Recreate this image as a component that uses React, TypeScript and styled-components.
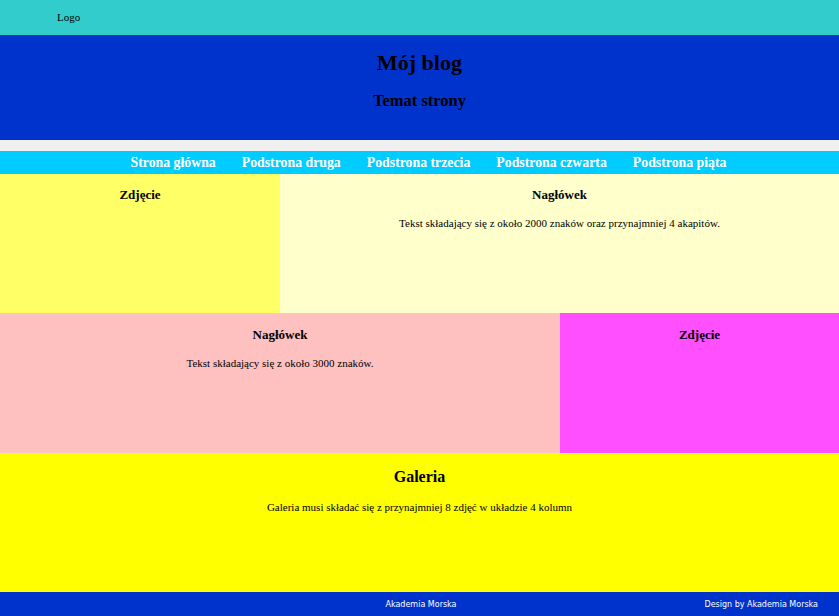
import React from "react";
import styled, { createGlobalStyle } from "styled-components";

const Global = createGlobalStyle`
  html, body { margin: 0; padding: 0; background: #f0f0f0; }
  body { font-family: "Liberation Serif", "Times New Roman", serif; color: #000; }
`;

const Page = styled.div`
  width: 839px;
  display: flex;
  flex-direction: column;
`;

const TopBar = styled.div`
  height: 35px;
  background: #33cccc;
  display: flex;
  align-items: center;
  padding-left: 57px;
  padding-bottom: 1px;
  box-sizing: border-box;
  font-size: 11px;
`;

const Header = styled.header`
  height: 105px;
  background: #0033cc;
  display: flex;
  flex-direction: column;
  align-items: center;
`;

const Title = styled.h1`
  margin: 14px 0 0;
  font-size: 22px;
  line-height: 28px;
  font-weight: bold;
`;

const Subtitle = styled.h2`
  margin: 14px 0 0;
  font-size: 16.5px;
  line-height: 20px;
  font-weight: bold;
`;

const Gap = styled.div`
  height: 11px;
  background: #f0f0f0;
`;

const Nav = styled.nav`
  height: 23px;
  background: #00ccff;
  display: flex;
  justify-content: center;
  align-items: center;
  gap: 26px;
  padding-left: 18px;
`;

const NavLink = styled.a`
  color: #fff;
  font-weight: bold;
  font-size: 13.8px;
  text-decoration: none;
  white-space: nowrap;
`;

const Row = styled.section<{ $cols: string; $h: number }>`
  display: grid;
  grid-template-columns: ${(p) => p.$cols};
  height: ${(p) => p.$h}px;
`;

const Cell = styled.div<{ $bg: string; $top?: number }>`
  background: ${(p) => p.$bg};
  text-align: center;
  padding-top: ${(p) => p.$top ?? 12}px;
  box-sizing: border-box;
`;

const CellTitle = styled.h3`
  margin: 0;
  font-size: 13px;
  line-height: 17px;
  font-weight: bold;
`;

const CellText = styled.p`
  margin: 13px 0 0;
  font-size: 11px;
  line-height: 14px;
`;

const Gallery = styled.section`
  height: 139px;
  background: #ffff00;
  text-align: center;
  padding-top: 13px;
  box-sizing: border-box;
`;

const GalleryTitle = styled.h2`
  margin: 0;
  font-size: 16px;
  line-height: 21px;
  font-weight: bold;
`;

const Footer = styled.footer`
  height: 24px;
  background: #0033cc;
  display: grid;
  grid-template-columns: 1fr 1fr 1fr;
  align-items: center;
  color: #fff;
  font-family: "DejaVu Sans", Verdana, sans-serif;
  font-size: 8px;
`;

const FooterCenter = styled.div`
  grid-column: 2;
  text-align: center;
  padding-left: 3px;
`;

const FooterRight = styled.div`
  text-align: right;
  padding-right: 21px;
`;

export default function App() {
  const links = [
    "Strona główna",
    "Podstrona druga",
    "Podstrona trzecia",
    "Podstrona czwarta",
    "Podstrona piąta",
  ];
  return (
    <Page>
      <Global />
      <TopBar>Logo</TopBar>
      <Header>
        <Title>Mój blog</Title>
        <Subtitle>Temat strony</Subtitle>
      </Header>
      <Gap />
      <Nav>
        {links.map((l) => (
          <NavLink key={l} href="#">
            {l}
          </NavLink>
        ))}
      </Nav>
      <Row $cols="280px 1fr" $h={139}>
        <Cell $bg="#ffff66">
          <CellTitle>Zdjęcie</CellTitle>
        </Cell>
        <Cell $bg="#ffffcc">
          <CellTitle>Nagłówek</CellTitle>
          <CellText>
            Tekst składający się z około 2000 znaków oraz przynajmniej 4 akapitów.
          </CellText>
        </Cell>
      </Row>
      <Row $cols="560px 1fr" $h={140}>
        <Cell $bg="#ffc0c0" $top={13}>
          <CellTitle>Nagłówek</CellTitle>
          <CellText>Tekst składający się z około 3000 znaków.</CellText>
        </Cell>
        <Cell $bg="#ff4fff" $top={13}>
          <CellTitle>Zdjęcie</CellTitle>
        </Cell>
      </Row>
      <Gallery>
        <GalleryTitle>Galeria</GalleryTitle>
        <CellText>
          Galeria musi składać się z przynajmniej 8 zdjęć w układzie 4 kolumn
        </CellText>
      </Gallery>
      <Footer>
        <FooterCenter>Akademia Morska</FooterCenter>
        <FooterRight>Design by Akademia Morska</FooterRight>
      </Footer>
    </Page>
  );
}
